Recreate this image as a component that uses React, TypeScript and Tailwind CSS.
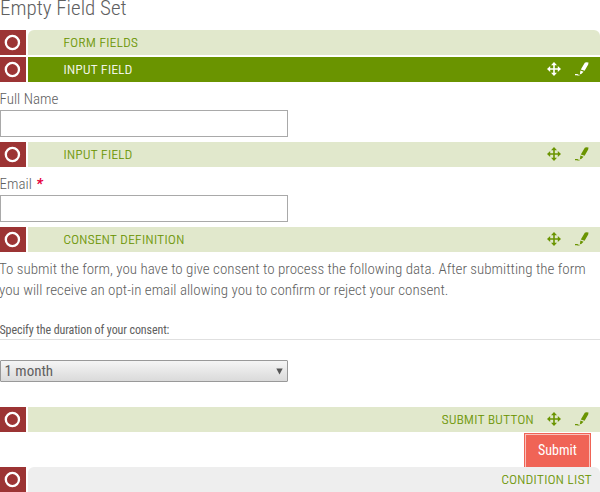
import React from "react";

const condensed = "font-['Roboto_Condensed',Roboto,'Liberation_Sans_Narrow',sans-serif] [font-stretch:75%]";

function MoveIcon() {
  return (
    <svg width="14" height="14" viewBox="0 0 14 14" fill="currentColor">
      <path d="M7 0 10 3.2H7.8V6.2H10.8V4L14 7 10.8 10V7.8H7.8V10.8H10L7 14 4 10.8H6.2V7.8H3.2V10L0 7 3.2 4V6.2H6.2V3.2H4Z" />
    </svg>
  );
}

function EditIcon() {
  return (
    <svg width="14" height="14" viewBox="0 0 14 14" fill="currentColor">
      <path d="M9.8.8 11.2.2 13.5.4 13.2 2.6 9.6 8.8 5.8 7.4ZM5.4 8.4 8.6 9.8 6.2 11.9 4.9 12.2ZM0 12.1H2.4L3.5 12.8H4.6V13.6H2.6L1.8 13.2H0Z" />
    </svg>
  );
}

type BarProps = {
  label: string;
  tone?: string;
  shape?: string;
  right?: boolean;
  icons?: boolean;
};

function Bar({ label, tone = "bg-[#e1e8cc] text-[#6a9400]", shape = "", right = false, icons = false }: BarProps) {
  return (
    <div className="flex h-[25px] shrink-0 gap-[2px]">
      <div className="w-[26px] bg-[#9c3434]">
        <svg width="26" height="25" viewBox="0 0 26 25">
          <circle cx="12.4" cy="12.5" r="6.6" fill="none" stroke="#fff" strokeWidth="2.3" />
        </svg>
      </div>
      <div className={`flex flex-1 items-center ${tone} ${shape} ${right ? "justify-end" : "pl-[35.5px]"} ${icons ? "pr-[11px]" : "pr-2"}`}>
        <span className="block whitespace-nowrap text-[13px] font-light leading-[25px] tracking-[0.42px] [-webkit-text-stroke:0.2px_currentColor]">{label}</span>
        {icons && (
          <div className={`-mt-px flex items-center gap-[14px] ${right ? "ml-[13px]" : "ml-auto"}`}>
            <MoveIcon />
            <EditIcon />
          </div>
        )}
      </div>
    </div>
  );
}

function Field({ label, required = false }: { label: string; required?: boolean }) {
  return (
    <div className="h-[60px] pt-[7px]">
      <label className="-ml-[0.5px] block h-[21px] text-[15px] leading-[20px]">
        {label}
        {required && <span className="ml-[4.5px] font-bold italic text-[#e6003c]">*</span>}
      </label>
      <input className="block h-[27px] w-[288px] border border-[#a9a9a9] bg-white" />
    </div>
  );
}

export default function App() {
  return (
    <div className={`flex h-[492px] w-[600px] flex-col overflow-hidden bg-white font-light text-[#606060] ${condensed}`}>
      <h1 className="-mt-1 h-[34px] shrink-0 text-[21px] leading-[24px]">Empty Field Set</h1>
      <Bar label="FORM FIELDS" shape="rounded-t-[6px]" />
      <div className="h-[2px]" />
      <Bar label="INPUT FIELD" tone="bg-[#6a9400] text-white" icons />
      <Field label="Full Name" />
      <Bar label="INPUT FIELD" icons />
      <Field label="Email" required />
      <Bar label="CONSENT DEFINITION" icons />
      <p className="-ml-px h-[70px] pt-[7px] text-[15px] leading-[21px]">
        To submit the form, you have to give consent to process the following data. After submitting the form
        <br />
        you will receive an opt-in email allowing you to confirm or reject your consent.
      </p>
      <div className="h-[18px] border-b border-[#e0e0e0] text-[12px] font-normal leading-[16px] tracking-[-0.1px]">
        <span className="-ml-[0.5px]">Specify the duration of your consent:</span>
      </div>
      <div className="mt-5 flex h-[22px] w-[288px] shrink-0 items-center justify-between rounded-[1px] border border-[#999] bg-linear-to-b from-[#f5f5f5] to-[#dadada] pl-[3.5px] pr-[4.5px] text-[15px] font-normal">
        <span>1 month</span>
        <svg width="7" height="7" viewBox="0 0 7 7"><path d="M.3.5H6.7L3.5 6.5Z" fill="#555" /></svg>
      </div>
      <div className="h-[25px] shrink-0" />
      <Bar label="SUBMIT BUTTON" right icons />
      <div className="flex h-[35px] shrink-0 justify-end pr-[9px] pt-px">
        <button className="h-[34px] w-[67px] bg-[#f06456] p-px">
          <span className="block h-[33px] border border-b-0 border-[#f9c1bb] text-center text-[14px] font-normal leading-[31px] text-white">Submit</span>
        </button>
      </div>
      <Bar label="CONDITION LIST" tone="bg-[#eeeeee] text-[#6a9400]" shape="rounded-t-[6px]" right />
    </div>
  );
}
